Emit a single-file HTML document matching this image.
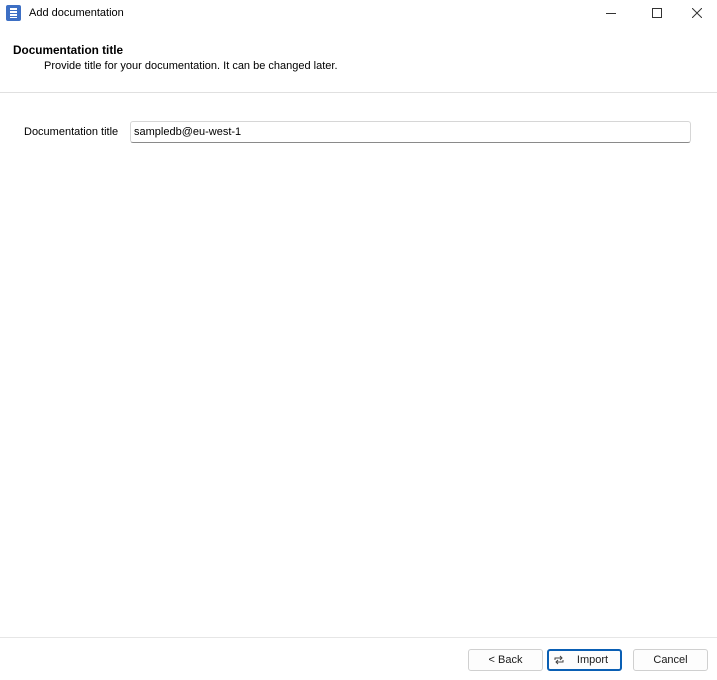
<!DOCTYPE html>
<html><head><style>
*{margin:0;padding:0;box-sizing:border-box}
body{width:717px;height:680px;background:#fff;font-family:"Liberation Sans",sans-serif;font-size:11px;color:#000;position:relative;overflow:hidden}
.a{position:absolute}
.btn{position:absolute;top:649px;height:22px;border:1px solid #d0d0d0;border-radius:3px;background:#fdfdfd;font-size:11px;text-align:center;line-height:20px;color:#1a1a1a}
</style></head><body>
<div class="a" style="left:6px;top:5px;width:15px;height:16px;background:#3d6fc4;border-radius:2px"></div>
<div class="a" style="left:10px;top:8px;width:7px;height:2px;background:#fff"></div>
<div class="a" style="left:10px;top:11px;width:7px;height:2px;background:#fff"></div>
<div class="a" style="left:10px;top:14px;width:7px;height:2px;background:#fff"></div>
<div class="a" style="left:10px;top:17px;width:7px;height:1px;background:#fff"></div>
<div class="a" style="left:29px;top:7px;font-size:11px">Add documentation</div>
<div class="a" style="left:606px;top:13px;width:10px;height:1px;background:#333"></div>
<div class="a" style="left:652px;top:8px;width:10px;height:10px;border:1px solid #333"></div>
<svg class="a" style="left:692px;top:8px" width="10" height="10" viewBox="0 0 10 10" stroke="#333" stroke-width="1"><path d="M0 0L10 10M10 0L0 10"/></svg>
<div class="a" style="left:13px;top:43px;font-weight:bold;font-size:11.8px">Documentation title</div>
<div class="a" style="left:44px;top:60px;font-size:11px">Provide title for your documentation. It can be changed later.</div>
<div class="a" style="left:0;top:92px;width:717px;height:1px;background:#e0e0e0"></div>
<div class="a" style="left:24px;top:126px;font-size:11px">Documentation title</div>
<div class="a" style="left:130px;top:121px;width:561px;height:22px;border:1px solid #d6d6d6;border-bottom-color:#8a8a8a;border-radius:3px"></div>
<div class="a" style="left:134px;top:126px;font-size:11px">sampledb@eu-west-1</div>
<div class="a" style="left:0;top:637px;width:717px;height:1px;background:#e6e6e6"></div>
<div class="btn" style="left:468px;width:75px">&lt; Back</div>
<div class="btn" style="left:547px;width:75px;border:2px solid #0a5fb4;line-height:18px">
<svg class="a" style="left:4px;top:3px" width="12" height="12" viewBox="0 0 12 12" fill="none" stroke="#444" stroke-width="1"><path d="M2 6V4h7M7 2l2 2-2 2M10 6v2H3M5 10L3 8l2-2"/></svg>
<span style="margin-left:16px">Import</span></div>
<div class="btn" style="left:633px;width:75px">Cancel</div>
</body></html>
